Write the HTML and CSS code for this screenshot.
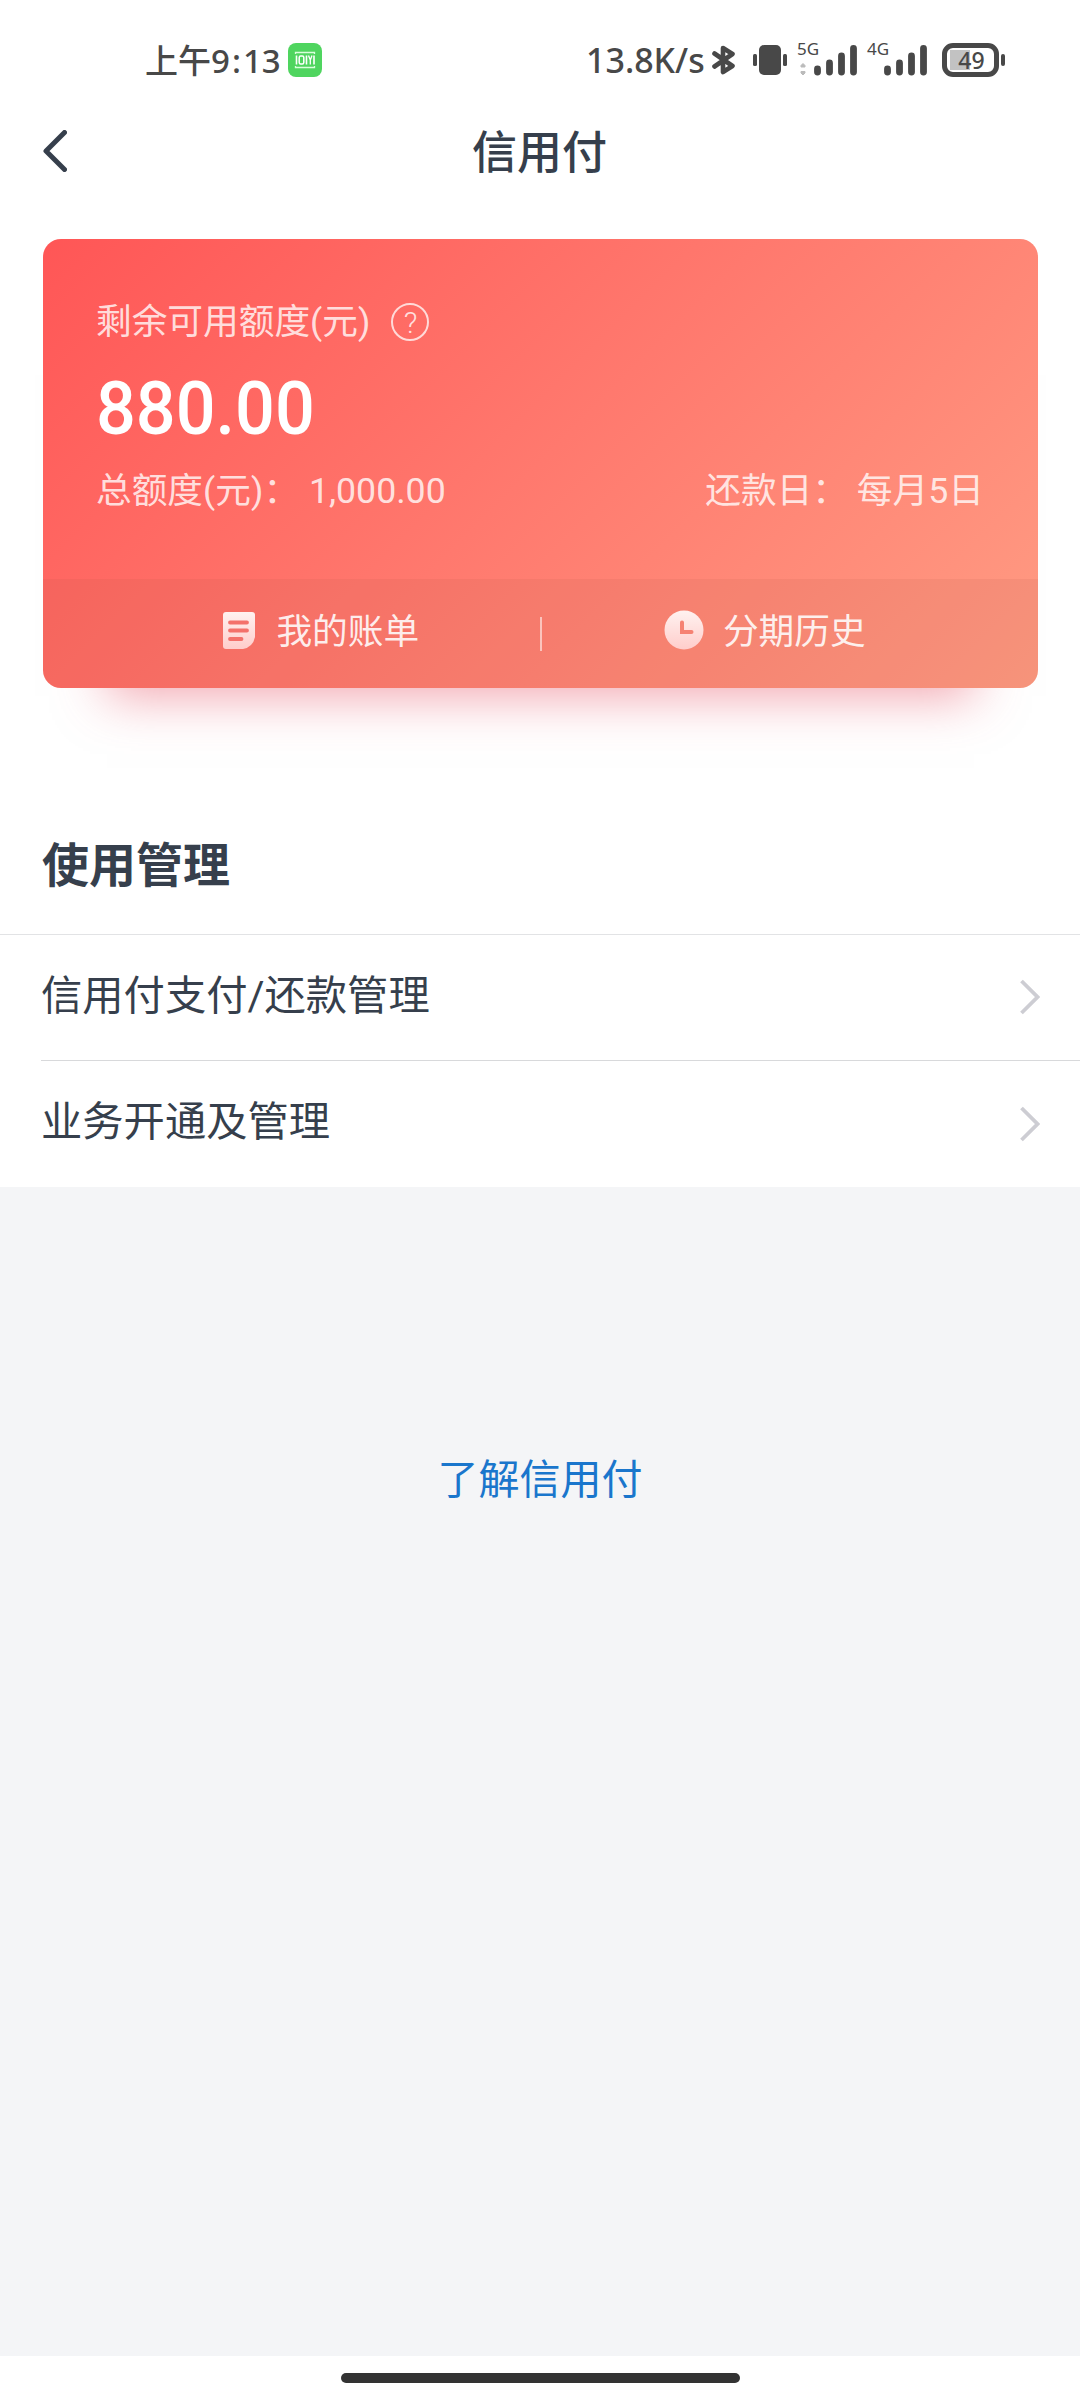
FILE: index.html
```html
<!DOCTYPE html>
<html lang="zh-CN">

<head>
    <meta charset="UTF-8">
    <meta name="viewport" content="width=device-width, initial-scale=1.0">
    <title>信用付</title>
    <link rel="stylesheet" href="styles.css">
</head>

<body>
    <div class="status-bar">
        <div class="status-left">
            <span class="time">上午9<span class="colon">:</span>13</span>
            <svg class="app-badge" width="34" height="34" viewBox="0 0 34 34">
                <rect width="34" height="34" rx="8" fill="#4fd55f"/>
                <path d="M7.500 11V9.500H26.500V11M7.500 23V24.500H26.500V23" fill="none" stroke="#d9ffdc" stroke-width="1.300"/>
                <path d="M8.500 12.500V21.500M18.500 12.500V21.500M26 12.500V21.500" stroke="#fff" stroke-width="1.600"/>
                <rect x="11.200" y="13" width="4.600" height="8" rx="1.500" fill="none" stroke="#fff" stroke-width="1.500"/>
                <path d="M20.500 12.500L22.300 17V21.500M24 12.500L22.300 17" fill="none" stroke="#fff" stroke-width="1.300"/>
            </svg>
        </div>
        <div class="status-right">
            <span class="speed">13.8K/s</span>
            <svg class="bluetooth" width="24" height="32" viewBox="0 0 24 32">
                <path d="M2.500 9.500L20.500 22L11 28V4L20.500 10L2.500 22.500" fill="none" stroke="#484848" stroke-width="4.600" stroke-linejoin="round" stroke-linecap="round"/>
            </svg>
            <svg class="vibrate" width="34" height="30" viewBox="0 0 34 30">
                <rect x="6" y="0" width="22" height="30" rx="5" fill="#484848"/>
                <rect x="0" y="9" width="4" height="12" rx="1.500" fill="#484848"/>
                <rect x="30" y="9" width="4" height="12" rx="1.500" fill="#484848"/>
            </svg>
            <div class="signal">
                <span class="network">5G</span>
                <svg width="60" height="34" viewBox="0 0 60 34">
                    <path d="M4 24V22.500L6 20.500L8 22.500V24ZM4 28.500V30L6 32L8 30V28.500Z" fill="#bbb" stroke="#bbb" stroke-linejoin="round"/>
                    <path d="M20.500 26V29M32.500 20V29M44.500 13V29M56.500 5.500V29" stroke="#484848" stroke-width="6.800" stroke-linecap="round"/>
                </svg>
            </div>
            <div class="signal">
                <span class="network">4G</span>
                <svg width="60" height="34" viewBox="0 0 60 34">
                    <path d="M20.500 26V29M32.500 20V29M44.500 13V29M56.500 5.500V29" stroke="#484848" stroke-width="6.800" stroke-linecap="round"/>
                </svg>
            </div>
            <div class="battery">
                <span class="battery-level">49</span>
            </div>
            <span class="battery-cap"></span>
        </div>
    </div>

    <header class="nav-bar">
        <svg class="back" width="24" height="42" viewBox="0 0 24 42">
            <path d="M21.500 2.500L3 21L21.500 39.500" fill="none" stroke="#363f4c" stroke-width="5" stroke-linejoin="round" stroke-linecap="round"/>
        </svg>
        <h1>信用付</h1>
    </header>

    <section class="card">
        <div class="card-main">
            <div class="card-label">
                <span>剩余可用额度(元)</span>
                <span class="help">?</span>
            </div>
            <div class="amount">880.00</div>
            <div class="card-detail">
                <span>总额度(元)： <span class="total">1,000.00</span></span>
                <span>还款日： 每月5日</span>
            </div>
        </div>
        <div class="card-footer">
            <a class="card-link bill">
                <svg width="32" height="37" viewBox="0 0 32 37">
                    <defs>
                        <linearGradient id="icon-fill" x1="0" y1="0" x2="0" y2="1">
                            <stop offset="0" stop-color="#fff2f0"/>
                            <stop offset="1" stop-color="#ffcdcb"/>
                        </linearGradient>
                    </defs>
                    <path d="M3 0H29Q32 0 32 3V25Q30 35 20 37H3Q0 37 0 34V3Q0 0 3 0Z" fill="url(#icon-fill)"/>
                    <path d="M7 10.500H24M7 18.500H24M7 27H18.500" stroke="#f4716b" stroke-width="3.800" stroke-linecap="round"/>
                </svg>
                <span>我的账单</span>
            </a>
            <span class="divider"></span>
            <a class="card-link history">
                <svg width="40" height="40" viewBox="0 0 40 40">
                    <circle cx="20" cy="20" r="19.500" fill="url(#icon-fill)"/>
                    <path d="M18 12.500V22H27.500" fill="none" stroke="#f68273" stroke-width="4" stroke-linecap="round"/>
                </svg>
                <span>分期历史</span>
            </a>
        </div>
    </section>

    <h2 class="section-title">使用管理</h2>
    <ul class="menu">
        <li class="menu-item">
            <span>信用付支付/还款管理</span>
            <svg width="20" height="36" viewBox="0 0 20 36">
                <path d="M1.500 2L17.500 18L1.500 34" fill="none" stroke="#cdcdd3" stroke-width="3.800"/>
            </svg>
        </li>
        <li class="menu-item">
            <span>业务开通及管理</span>
            <svg width="20" height="36" viewBox="0 0 20 36">
                <path d="M1.500 2L17.500 18L1.500 34" fill="none" stroke="#cdcdd3" stroke-width="3.800"/>
            </svg>
        </li>
    </ul>

    <main class="content">
        <a class="about-link">了解信用付</a>
    </main>

    <div class="home-area">
        <div class="home-bar"></div>
    </div>
</body>

</html>
```

FILE: styles.css
```css
* {
    box-sizing: border-box;
}

body {
    display: flex;
    flex-direction: column;
    width: 1080px;
    height: 2400px;
    margin: 0;
    background-color: #fff;
    color: #363f4c;
    font-family: Roboto, "Noto Sans CJK SC", sans-serif;
    overflow: hidden;
}

.status-bar {
    display: flex;
    justify-content: space-between;
    align-items: center;
    height: 120px;
    padding: 0 75px 0 145px;
    color: #484848;
    font-family: "Noto Sans", "Noto Sans CJK SC", sans-serif;
    font-weight: 500;
}

.status-left,
.status-right {
    display: flex;
    align-items: center;
}

.time {
    width: 143px;
    padding-bottom: 3px;
    font-size: 33px;
    white-space: nowrap;
}

.colon {
    padding: 0 2px;
}

.speed {
    width: 126px;
    font-size: 34px;
    white-space: nowrap;
}

.bluetooth {
    margin-right: 17px;
}

.vibrate {
    margin-right: 10px;
}

.signal {
    position: relative;
    width: 60px;
    height: 34px;
    margin-right: 10px;
}

.network {
    position: absolute;
    top: -4px;
    left: 0;
    font-size: 17px;
    font-weight: 400;
    line-height: 20px;
}

.battery {
    display: flex;
    align-items: center;
    justify-content: center;
    width: 57px;
    height: 34px;
    margin-left: 5px;
    border: 5px solid #484848;
    border-radius: 11px;
    background: linear-gradient(#c2c2c2, #c2c2c2) 3px center / 20px 20px no-repeat;
}

.battery-level {
    padding-left: 2px;
    font-size: 23px;
    font-weight: 500;
    line-height: 24px;
}

.battery-cap {
    width: 4px;
    height: 12px;
    margin-left: 2px;
    border-radius: 2px;
    background-color: #484848;
}

.nav-bar {
    display: grid;
    grid-template-columns: 100px 1fr 100px;
    align-items: center;
    height: 60px;
    padding: 0 0 0 43px;
    margin-right: 44px;
}

.nav-bar h1 {
    margin: 0;
    padding-top: 6px;
    font-size: 45px;
    font-weight: 500;
    line-height: 56px;
    text-align: center;
}

.card {
    display: flex;
    flex-direction: column;
    height: 449px;
    margin: 59px 42px 0 43px;
    border-radius: 18px;
    background: linear-gradient(135deg, #ff5656 0%, #ff796e 50%, #ff9c83 100%);
    box-shadow: 0 72px 48px -64px rgba(230, 75, 95, 0.5);
    color: rgba(255, 255, 255, 0.8);
    font-size: 35.700px;
    font-weight: 400;
}

.card-main {
    height: 340px;
    padding: 57px 54px 0 53px;
}

.card-label {
    display: flex;
    align-items: center;
    gap: 21px;
    height: 50px;
}

.card-label > span:first-child {
    padding-bottom: 5px;
}

.help {
    display: flex;
    align-items: center;
    justify-content: center;
    width: 38px;
    height: 38px;
    margin-top: 2px;
    border: 2.500px solid rgba(255, 255, 255, 0.75);
    border-radius: 50%;
    font-size: 30px;
    font-weight: 300;
}

.amount {
    height: 120px;
    color: #fff;
    font-size: 75px;
    font-weight: 500;
    line-height: 124px;
    transform: scaleX(0.935);
    transform-origin: left;
}

.card-detail {
    display: flex;
    justify-content: space-between;
    height: 50px;
    line-height: 50px;
}

.total {
    margin-left: 1px;
}

.card-footer {
    display: flex;
    align-items: center;
    height: 109px;
    border-radius: 0 0 18px 18px;
    background-color: rgba(170, 80, 60, 0.1);
    color: rgba(255, 255, 255, 0.88);
}

.card-link {
    display: flex;
    flex: 1;
    align-items: center;
    justify-content: center;
    gap: 21px;
}

.card-link svg {
    margin-bottom: 7px;
}

.card-link span {
    padding-bottom: 11px;
}

.bill {
    padding-left: 60px;
}

.history {
    gap: 19px;
    padding: 0 55px 0 5px;
}

.divider {
    width: 2px;
    height: 34px;
    background-color: rgba(255, 255, 255, 0.55);
}

.section-title {
    height: 247px;
    margin: 0;
    padding: 143px 0 0 42px;
    border-bottom: 1px solid #e2e3e5;
    font-size: 47px;
    font-weight: 700;
    line-height: 70px;
}

.menu {
    margin: 0;
    padding: 0 0 0 41px;
    list-style: none;
}

.menu-item {
    display: flex;
    align-items: center;
    justify-content: space-between;
    height: 125px;
    padding-right: 40px;
    font-size: 41.300px;
    font-weight: 400;
}

.menu-item span {
    padding-bottom: 12px;
}

.menu-item svg {
    margin-bottom: 1px;
}

.menu-item + .menu-item {
    height: 127px;
    border-top: 1px solid #d8d9db;
}

.content {
    flex: 1;
    padding-top: 263px;
    background-color: #f4f5f7;
    text-align: center;
}

.about-link {
    color: #1a76cc;
    font-size: 41px;
    line-height: 60px;
}

.home-area {
    height: 44px;
    padding-top: 17px;
}

.home-bar {
    width: 399px;
    height: 10px;
    margin: 0 auto;
    border-radius: 5px;
    background-color: #333;
}
```
